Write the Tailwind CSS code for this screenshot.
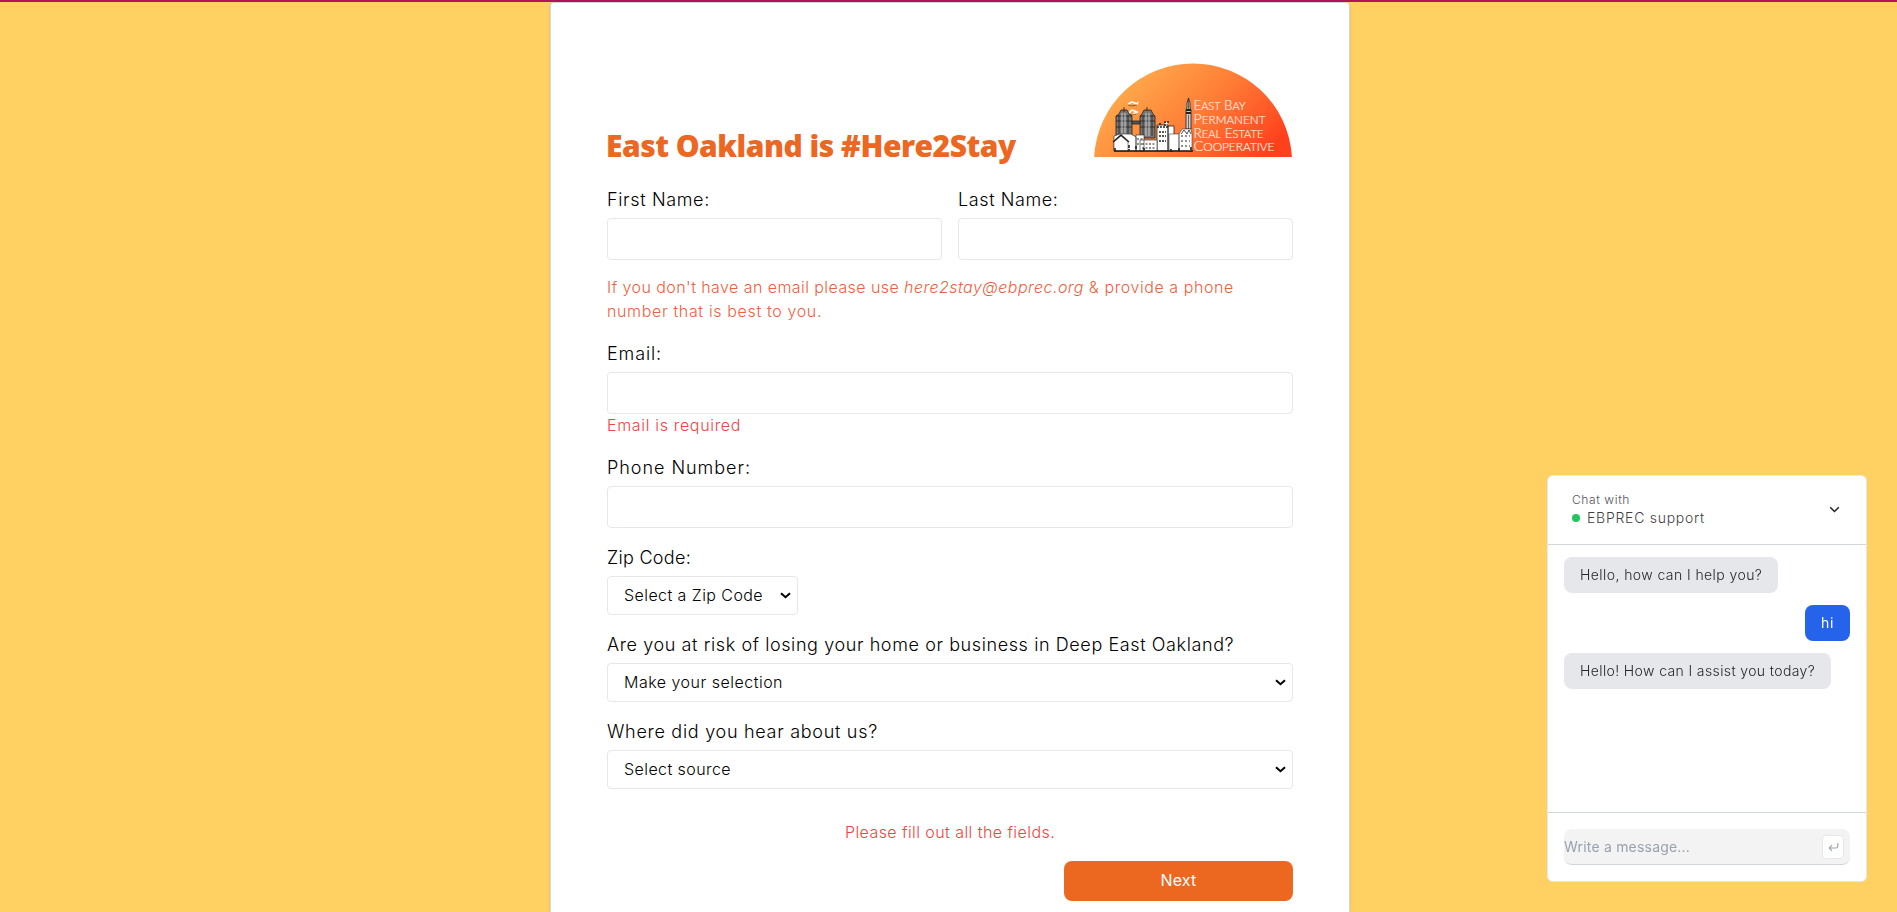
<!DOCTYPE html>
<html lang="en">
<head>
<meta charset="utf-8">
<title>East Oakland is #Here2Stay</title>
<script src="https://cdn.jsdelivr.net/npm/@tailwindcss/browser@4"></script>
</head>
<body class="h-screen overflow-hidden bg-[#ffd163] font-['Inter',sans-serif] font-light text-black">
<div class="h-[2px] bg-[#b01657]"></div>
<main class="ml-[550px] flex h-[910px] w-[800px] flex-col rounded-t border border-b-0 border-gray-300 bg-white px-14 shadow-sm">
  <header class="flex h-[154px] shrink-0 items-end justify-between">
    <h1 class="mb-[-9px] -ml-px font-['Open_Sans',sans-serif] text-[30px] leading-10 font-extrabold tracking-[-0.51px] text-[#ec671f]">East Oakland is #Here2Stay</h1>
    <svg class="h-[94px] w-[199px]" viewBox="1094 63 199 94">
      <defs><linearGradient id="sun" gradientUnits="userSpaceOnUse" x1="1130" y1="72" x2="1240" y2="182"><stop offset="0" stop-color="#ffab4c"/><stop offset=".5" stop-color="#ff7d36"/><stop offset="1" stop-color="#ff401d"/></linearGradient></defs>
      <path d="M1094.100 157A99.050 99.050 0 0 1 1291.900 157Z" fill="url(#sun)"/>
      <g stroke="#222" stroke-width=".8" fill="#fff">
        <path d="M1128 104l4-2 5 2 1-2M1129 113l3-3 5 2-4 2" fill="none" stroke="#fff" stroke-width="1.6"/>
        <path d="M1128 105l4 1 5-1M1128 114l4 1 4-1" fill="none" stroke-width=".5"/>
        <path d="M1116 137V116l3-2 2-4h6l2 4 3 2v21z" fill="#777"/>
        <path d="M1140 138V116l2-2 2-4h7l2 4 2 2v22z" fill="#777"/>
        <path d="M1124 107v5M1147 107v4M1116 116h16M1116 121h16M1116 127h16M1140 116h15M1140 121h15M1140 127h15M1119 115v21M1128 115v21M1143 115v21M1152 115v21"/>
        <path d="M1122 113v23M1125 113v23M1146 113v23M1149 113v23" stroke="#ddd"/>
        <path d="M1132 121h8v3h-8z" fill="#555"/>
        <path d="M1157 151v-26h11v26zM1168 151v-25h6v25z"/>
        <path d="M1157 127h11M1160 125v-3M1165 126v-4h4M1159 132h7M1159 136h7M1159 141h7" stroke-dasharray="2 1" stroke-width="1.5"/>
        <path d="M1114 151v-15l6-2h11l5 3v14zM1136 151v-16h8v16zM1140 151v-11h17v11z" stroke-width=".6"/>
        <path d="M1137 139h6M1137 144h6M1142 144h13M1142 148h13" stroke-dasharray="2 1.5" stroke-width="1.2"/>
        <path d="M1186 129v-19l1-2v-5l1.500-5 1.500 5v5l1 2v19z" fill="#ccc"/>
        <path d="M1186 110h5M1186 113h5" stroke-width="2"/>
        <path d="M1188.500 98v12M1188.500 115v14" stroke-width=".6"/>
        <path d="M1169 134h10v17h-10zM1179 134l3-5h9l1 5v17h-13z" stroke-width=".5"/>
        <path d="M1181 136h9M1181 141h9M1181 146h9" stroke-dasharray="2 2" stroke-width="1.2"/>
        <path d="M1181 134l3-4 3 4 2-4 2 4" fill="none" stroke-width=".8"/>
        <path d="M1114 142l7-6 7 6v9h-14z" stroke-width=".5"/>
        <path d="M1113 142l8-7 8 7M1114 151h79" fill="none" stroke-width="1.4"/>
        <path d="M1115 148v4M1129 145v6M1136 146v5M1144 148v4M1171 149v3M1179 148v4M1191 147v5" stroke-width="1.6" stroke-dasharray="3 1"/>
      </g>
      <g fill="#ffe9e0" font-family="Lato" font-weight="300" font-size="14" stroke="#ffe9e0" stroke-width=".2">
        <text x="1193.500" y="110" textLength="52" lengthAdjust="spacingAndGlyphs">E<tspan font-size="11.500">AST</tspan> B<tspan font-size="11.500">AY</tspan></text>
        <text x="1193.500" y="123.700" textLength="72" lengthAdjust="spacingAndGlyphs">P<tspan font-size="11.500">ERMANENT</tspan></text>
        <text x="1193.500" y="137.500" textLength="70" lengthAdjust="spacingAndGlyphs">R<tspan font-size="11.500">EAL</tspan> E<tspan font-size="11.500">STATE</tspan></text>
        <text x="1193.500" y="151" textLength="81" lengthAdjust="spacingAndGlyphs">C<tspan font-size="11.500">OOPERATIVE</tspan></text>
      </g>
    </svg>
  </header>
  <form class="mt-[29px] flex flex-col gap-4 text-base">
    <div class="grid grid-cols-2 gap-4">
      <label class="flex flex-col gap-1 text-lg leading-7"><span class="tracking-[0.65px]">First Name:</span><input class="h-[42px] rounded border border-gray-200"></label>
      <label class="flex flex-col gap-1 text-lg leading-7"><span class="tracking-[0.6px]">Last Name:</span><input class="h-[42px] rounded border border-gray-200"></label>
    </div>
    <p class="-mt-px mb-px leading-6 tracking-[0.43px] text-[#ec5f3f]">If you don't have an email please use <em class="tracking-[0.46px]">here2stay@ebprec.org</em> <span class="tracking-[0.57px]">&amp; provide a phone<br></span><span class="tracking-[0.64px]">number that is best to you.</span></p>
    <div class="flex flex-col">
      <label class="flex flex-col gap-1 text-lg leading-7"><span class="tracking-[0.87px]">Email:</span><input class="h-[42px] rounded border border-gray-200"></label>
      <p class="-mt-px mb-px leading-6 tracking-[0.67px] text-[#ef4444]">Email is required</p>
    </div>
    <label class="flex flex-col gap-1 text-lg leading-7"><span class="tracking-[0.96px]">Phone Number:</span><input class="h-[42px] rounded border border-gray-200"></label>
    <label class="flex flex-col items-start gap-1 text-lg leading-7"><span class="tracking-[0.29px]">Zip Code:</span>
      <span class="relative flex h-[39px] w-[191px]"><select class="w-full appearance-none rounded border border-gray-200 bg-white px-4 pb-0.5 text-base tracking-[0.43px]"><option>Select a Zip Code</option></select><svg class="absolute top-4 right-[7px] h-[7px] w-[11px]" viewBox="0 0 11 7" fill="none" stroke="#000" stroke-width="2"><path d="M1 1.200 5.500 5.200 10 1.200"/></svg></span></label>
    <label class="flex flex-col gap-1 text-lg leading-7"><span class="tracking-[0.6px]">Are you at risk of losing your home or business in Deep East Oakland?</span>
      <span class="relative flex h-[39px]"><select class="w-full appearance-none rounded border border-gray-200 bg-white px-4 pb-0.5 text-base tracking-[0.49px]"><option>Make your selection</option></select><svg class="absolute top-4 right-[7px] h-[7px] w-[11px]" viewBox="0 0 11 7" fill="none" stroke="#000" stroke-width="2"><path d="M1 1.200 5.500 5.200 10 1.200"/></svg></span></label>
    <label class="flex flex-col gap-1 text-lg leading-7"><span class="tracking-[0.71px]">Where did you hear about us?</span>
      <span class="relative flex h-[39px]"><select class="w-full appearance-none rounded border border-gray-200 bg-white px-4 pb-0.5 text-base tracking-[0.43px]"><option>Select source</option></select><svg class="absolute top-4 right-[7px] h-[7px] w-[11px]" viewBox="0 0 11 7" fill="none" stroke="#000" stroke-width="2"><path d="M1 1.200 5.500 5.200 10 1.200"/></svg></span></label>
    <p class="mt-[15px] mb-px text-center leading-6 tracking-[0.43px] text-[#ef4444]">Please fill out all the fields.</p>
    <button type="button" class="h-10 w-[229px] self-end rounded-lg bg-[#ec671f] pb-0.5 font-normal tracking-[0.2px] text-white">Next</button>
  </form>
</main>

<aside class="fixed right-[30px] bottom-[30px] flex h-[407px] w-[320px] flex-col rounded-md border border-gray-200 bg-white text-sm">
  <div class="flex h-[69px] shrink-0 items-center justify-between border-b border-gray-300 pr-[26px] pl-6">
    <div class="text-zinc-700">
      <p class="text-xs leading-4 tracking-[0.6px] text-zinc-600">Chat with</p>
      <p class="flex h-5 items-center gap-[7px] tracking-[0.74px]"><span class="size-2 rounded-full bg-[#22c55e]"></span>EBPREC support</p>
    </div>
    <svg class="mb-0.5 size-[11px]" viewBox="0 0 11 11" fill="none" stroke="#222" stroke-width="1.500"><path d="M1.200 3.200 5.500 7.500l4.300-4.300"/></svg>
  </div>
  <div class="flex grow flex-col gap-3 px-4 pt-3 text-zinc-800">
    <p class="flex h-9 w-[214px] items-center self-start rounded-lg bg-gray-200 px-4 tracking-[0.42px] whitespace-nowrap">Hello, how can I help you?</p>
    <p class="flex h-9 w-[45px] items-center self-end rounded-lg bg-[#2563eb] px-4 font-normal tracking-[0.7px] text-white">hi</p>
    <p class="flex h-9 w-[267px] items-center self-start rounded-lg bg-gray-200 px-4 tracking-[0.38px] whitespace-nowrap">Hello! How can I assist you today?</p>
  </div>
  <div class="h-[69px] shrink-0 border-t border-gray-300 px-4 pt-4">
    <div class="flex h-9 items-center justify-between rounded-lg border-b border-gray-300 bg-[#f3f3f3] pr-1.5">
      <span class="font-normal tracking-[0.2px] text-gray-400">Write a message...</span>
      <span class="flex h-6 w-[22px] items-center justify-center rounded border border-gray-200 bg-white"><svg class="h-[10px] w-[11px]" viewBox="0 0 11 10" fill="none" stroke="#9ca3af" stroke-width="1.100"><path d="M9.800 1v3.200a1.800 1.800 0 0 1-1.800 1.800H1.200M4 3.200 1.200 6 4 8.800"/></svg></span>
    </div>
  </div>
</aside>
</body>
</html>
